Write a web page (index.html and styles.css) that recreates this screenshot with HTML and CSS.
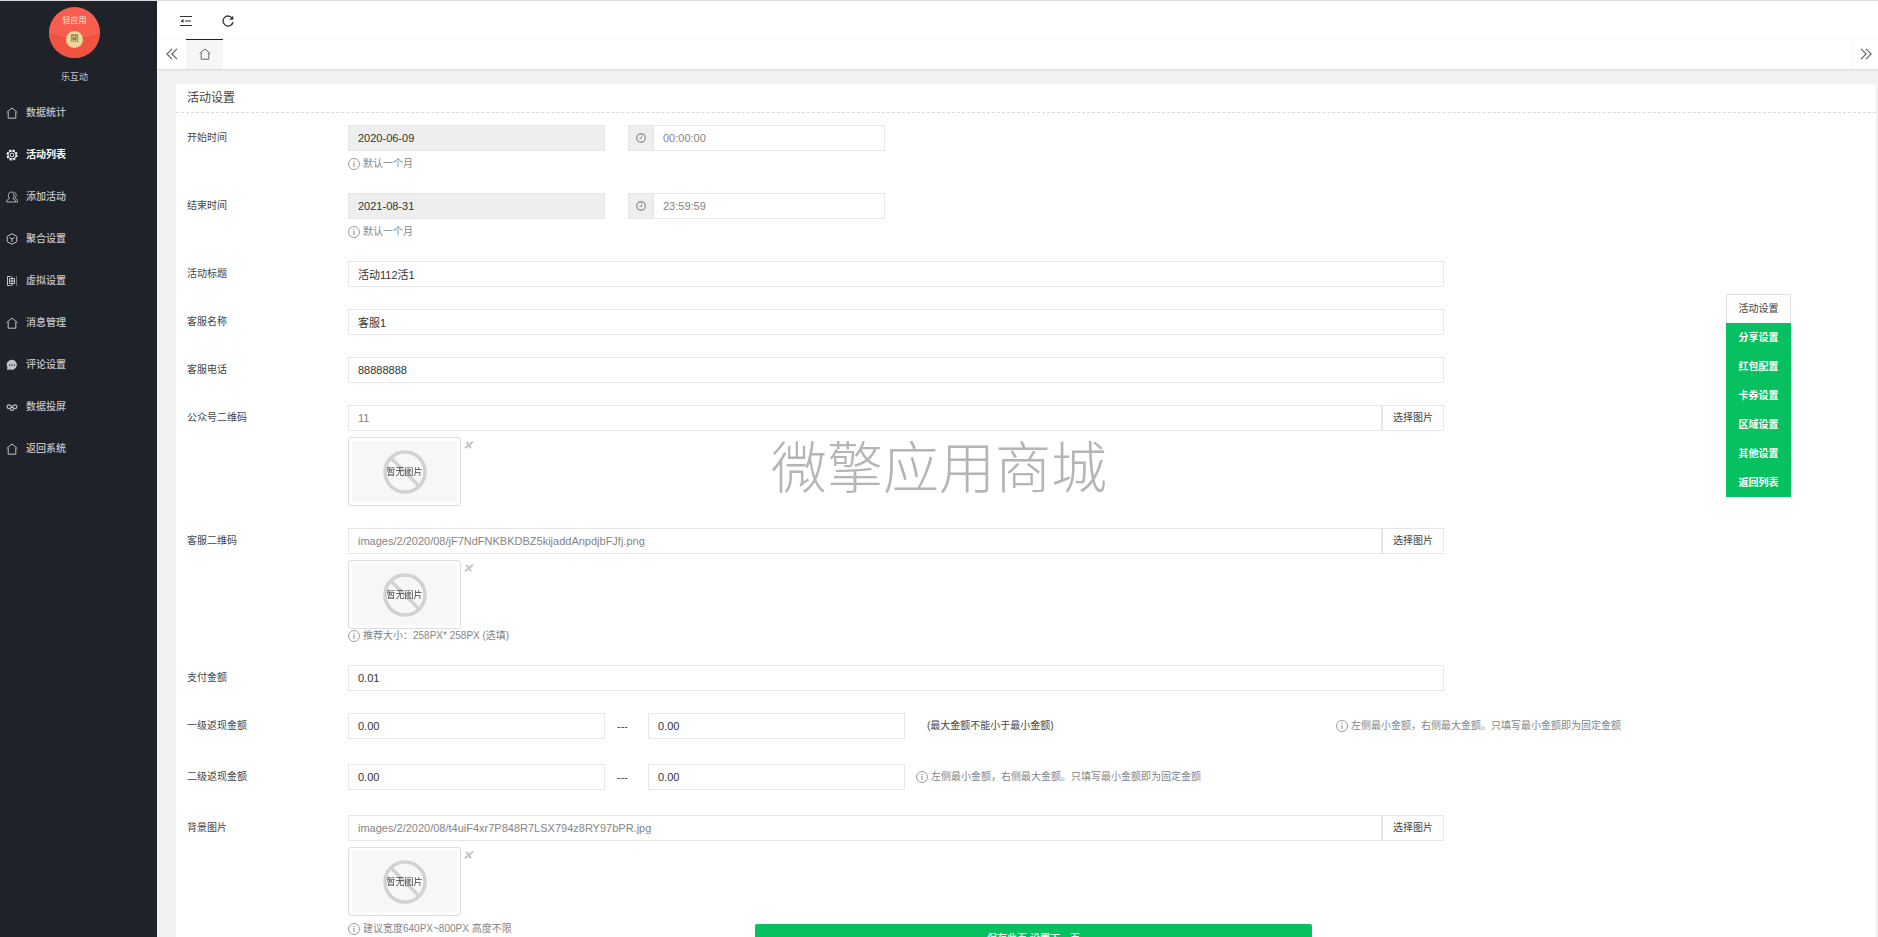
FILE: index.html
```html
<!DOCTYPE html>
<html lang="zh-CN">
<head>
  <meta charset="UTF-8">
  <meta name="viewport" content="width=device-width, initial-scale=1.0">
  <title>活动设置</title>
  <link rel="stylesheet" href="styles.css">
</head>
<body>
  <!-- icons -->
  <svg class="sprite" width="0" height="0" aria-hidden="true">
    <symbol id="i-home" viewBox="0 0 12 12"><path d="M.6 5.6 6 1l5.4 4.6M2.2 4.8v6.4h7.6V4.8" fill="none" stroke="currentColor"/></symbol>
    <symbol id="i-gear" viewBox="0 0 12 12"><circle cx="6" cy="6" r="4.9" fill="none" stroke="currentColor" stroke-width="1.400" stroke-dasharray="2.250 1.600"/><circle cx="6" cy="6" r="4" fill="none" stroke="currentColor" stroke-width=".9"/><circle cx="6" cy="6" r="1.900" fill="none" stroke="currentColor" stroke-width=".9"/></symbol>
    <symbol id="i-user" viewBox="0 0 12 12"><path d="M.6 11c0-2 1.200-2.800 2.900-3.300C1.700 6 2 1 5.200 1s3.500 5 1.700 6.700C8.600 8.200 9.600 9 9.600 11zM7.600 1.200c2.900-.1 3.200 4 1.500 5.900 1.700.5 2.400 1.500 2.400 3.900H9.800" fill="none" stroke="currentColor" stroke-width=".9"/></symbol>
    <symbol id="i-cube" viewBox="0 0 12 12"><path d="M6 .7 10.800 3.300v5.400L6 11.300 1.200 8.700V3.300zM3.500 4.500 6 6l2.500-1.500M6 6v3" fill="none" stroke="currentColor"/></symbol>
    <symbol id="i-board" viewBox="0 0 12 12"><path d="M4.500 1.500h-3v9h3M3.500 3.500h5v5h-5zM6 1.500v9.500M3.500 6h5" fill="none" stroke="currentColor"/><path d="M10.500 1.500v9.500" stroke="currentColor" stroke-dasharray="1 1"/></symbol>
    <symbol id="i-chat" viewBox="0 0 12 12"><path d="M6 .8a5.200 5 0 1 1-2.100 9.700L1 11l.5-2.500A5.100 5 0 0 1 6 .8z" fill="currentColor"/><path d="M3 5.500h1.300v1.200H3zM5.400 5.500h1.200v1.200H5.400zM7.800 5.500h1.200v1.200H7.800z" fill="#20222a"/></symbol>
    <symbol id="i-link" viewBox="0 0 12 12"><path d="M6 6C4.800 4.300 4 3.800 3 3.800a1.900 1.900 0 0 0 0 3.800C4.300 7.600 5 7 6 6s1.900-2.200 3-2.200a1.900 1.900 0 0 1 0 3.800C8 7.600 7 7 6 6zM4 8.500q2 1.500 4 0" fill="none" stroke="currentColor" stroke-width="1.200"/></symbol>
    <symbol id="i-info" viewBox="0 0 12 12"><circle cx="6" cy="6" r="5.500" fill="none" stroke="currentColor" stroke-width=".8"/><path d="M6 5v4M6 3v1" stroke="currentColor"/></symbol>
    <symbol id="i-clock" viewBox="0 0 12 12"><circle cx="6" cy="6" r="4.300" fill="none" stroke="currentColor" stroke-width="1.400"/><path d="M6.500 3.600v2.900H4.400" fill="none" stroke="currentColor"/></symbol>
    <symbol id="i-left" viewBox="0 0 12 12"><path d="M6 .8.900 6 6 11.200M11 .8 5.900 6l5.100 5.200" fill="none" stroke="currentColor" stroke-width="1.200"/></symbol>
    <symbol id="i-right" viewBox="0 0 12 12"><path d="M1 .8 6.100 6 1 11.200M6 .8 11.100 6 6 11.200" fill="none" stroke="currentColor" stroke-width="1.200"/></symbol>
    <symbol id="i-shrink" viewBox="0 0 12 12"><path d="M0 1.500h12M5 6h6M0 10.500h12" stroke="currentColor" stroke-width="1.200"/><path d="M.5 6 3.500 4v4z" fill="currentColor"/></symbol>
    <symbol id="i-refresh" viewBox="0 0 12 12"><path d="M10.300 3.300A5 5 0 1 0 11 7" fill="none" stroke="currentColor" stroke-width="1.300"/><path d="M11.300.7v4.100H7.200z" fill="currentColor"/></symbol>
    <symbol id="i-times" viewBox="0 0 10 8"><path d="M2.500.8 7 7.200M9 .8 1 7.200" stroke="currentColor" stroke-width="2"/></symbol>
    <symbol id="i-ban" viewBox="0 0 44 44"><circle cx="22" cy="22" r="20" fill="none" stroke="currentColor" stroke-width="3.500"/><path d="m8 8 28 28" stroke="currentColor" stroke-width="3.500"/></symbol>
  </svg>

  <div class="layout">
    <aside class="sidebar">
      <div class="brand">
        <div class="logo">
          <svg class="logo-flap" viewBox="0 0 51 51"><path d="M0 27Q25 37 51 27v24H0z" fill="#f0533f"/><path d="M0 27Q25 37 51 27" fill="none" stroke="#d9483a" stroke-width=".8"/></svg>
          <span class="logo-text">轻应用</span>
          <span class="logo-coin">開</span>
        </div>
        <div class="brand-name">乐互动</div>
      </div>
      <nav class="menu">
        <a href="#"><svg><use href="#i-home"/></svg>数据统计</a>
        <a href="#" class="active"><svg><use href="#i-gear"/></svg>活动列表</a>
        <a href="#"><svg><use href="#i-user"/></svg>添加活动</a>
        <a href="#"><svg><use href="#i-cube"/></svg>聚合设置</a>
        <a href="#"><svg><use href="#i-board"/></svg>虚拟设置</a>
        <a href="#"><svg><use href="#i-home"/></svg>消息管理</a>
        <a href="#"><svg><use href="#i-chat"/></svg>评论设置</a>
        <a href="#"><svg><use href="#i-link"/></svg>数据投屏</a>
        <a href="#"><svg><use href="#i-home"/></svg>返回系统</a>
      </nav>
    </aside>

    <div class="main">
      <header class="topbar">
        <button type="button" aria-label="收起菜单"><svg><use href="#i-shrink"/></svg></button>
        <button type="button" aria-label="刷新"><svg><use href="#i-refresh"/></svg></button>
      </header>
      <div class="tabs">
        <button type="button" class="tab-arrow" aria-label="向左"><svg><use href="#i-left"/></svg></button>
        <a href="#" class="tab" aria-label="首页"><svg><use href="#i-home"/></svg></a>
        <button type="button" class="tab-arrow tab-next" aria-label="向右"><svg><use href="#i-right"/></svg></button>
      </div>

      <form class="card">
        <h1 class="card-header">活动设置</h1>
        <div class="card-body">
          <div class="row">
            <label for="startDate">开始时间</label>
            <div class="field">
              <div class="inline">
                <input type="text" id="startDate" class="short" value="2020-06-09" readonly>
                <div class="group short time">
                  <span class="addon"><svg><use href="#i-clock"/></svg></span>
                  <input type="text" class="muted" aria-label="开始时刻" value="00:00:00">
                </div>
              </div>
              <p class="hint spaced"><svg><use href="#i-info"/></svg>默认一个月</p>
            </div>
          </div>
          <div class="row">
            <label for="endDate">结束时间</label>
            <div class="field">
              <div class="inline">
                <input type="text" id="endDate" class="short" value="2021-08-31" readonly>
                <div class="group short time">
                  <span class="addon"><svg><use href="#i-clock"/></svg></span>
                  <input type="text" class="muted" aria-label="结束时刻" value="23:59:59">
                </div>
              </div>
              <p class="hint spaced"><svg><use href="#i-info"/></svg>默认一个月</p>
            </div>
          </div>
          <div class="row">
            <label for="title">活动标题</label>
            <div class="field"><input type="text" id="title" class="long" value="活动112活1"></div>
          </div>
          <div class="row">
            <label for="kfName">客服名称</label>
            <div class="field"><input type="text" id="kfName" class="long" value="客服1"></div>
          </div>
          <div class="row">
            <label for="kfPhone">客服电话</label>
            <div class="field"><input type="text" id="kfPhone" class="long" value="88888888"></div>
          </div>
          <div class="row">
            <label for="mpQr">公众号二维码</label>
            <div class="field">
              <div class="group long">
                <input type="text" id="mpQr" class="muted" value="11">
                <button type="button" class="pick">选择图片</button>
              </div>
              <div class="preview">
                <div class="thumb"><div class="thumb-in"><svg><use href="#i-ban"/></svg><span>暂无图片</span></div></div>
                <button type="button" class="remove" aria-label="删除图片"><svg><use href="#i-times"/></svg></button>
              </div>
            </div>
          </div>
          <div class="row">
            <label for="kfQr">客服二维码</label>
            <div class="field">
              <div class="group long">
                <input type="text" id="kfQr" class="muted" value="images/2/2020/08/jF7NdFNKBKDBZ5kijaddAnpdjbFJfj.png">
                <button type="button" class="pick">选择图片</button>
              </div>
              <div class="preview">
                <div class="thumb"><div class="thumb-in"><svg><use href="#i-ban"/></svg><span>暂无图片</span></div></div>
                <button type="button" class="remove" aria-label="删除图片"><svg><use href="#i-times"/></svg></button>
              </div>
              <p class="hint"><svg><use href="#i-info"/></svg>推荐大小：258PX* 258PX (选填)</p>
            </div>
          </div>
          <div class="row">
            <label for="pay">支付金额</label>
            <div class="field"><input type="text" id="pay" class="long" value="0.01"></div>
          </div>
          <div class="row range">
            <label for="min1">一级返现金额</label>
            <div class="field inline">
              <input type="text" id="min1" class="short" value="0.00">
              <span class="dash">---</span>
              <input type="text" class="short" aria-label="一级最大金额" value="0.00">
              <span class="note">(最大金额不能小于最小金额)</span>
              <p class="hint"><svg><use href="#i-info"/></svg>左侧最小金额，右侧最大金额。只填写最小金额即为固定金额</p>
            </div>
          </div>
          <div class="row range">
            <label for="min2">二级返现金额</label>
            <div class="field inline">
              <input type="text" id="min2" class="short" value="0.00">
              <span class="dash">---</span>
              <input type="text" class="short" aria-label="二级最大金额" value="0.00">
              <p class="hint beside"><svg><use href="#i-info"/></svg>左侧最小金额，右侧最大金额。只填写最小金额即为固定金额</p>
            </div>
          </div>
          <div class="row">
            <label for="bg">背景图片</label>
            <div class="field">
              <div class="group long">
                <input type="text" id="bg" class="muted" value="images/2/2020/08/t4uiF4xr7P848R7LSX794z8RY97bPR.jpg">
                <button type="button" class="pick">选择图片</button>
              </div>
              <div class="preview">
                <div class="thumb"><div class="thumb-in"><svg><use href="#i-ban"/></svg><span>暂无图片</span></div></div>
                <button type="button" class="remove" aria-label="删除图片"><svg><use href="#i-times"/></svg></button>
              </div>
              <p class="hint spaced"><svg><use href="#i-info"/></svg>建议宽度640PX~800PX 高度不限</p>
            </div>
          </div>
        </div>
        <button type="submit" class="save">保存此页 设置下一页</button>
      </form>
    </div>
  </div>

  <nav class="side-nav">
    <a href="#" class="current">活动设置</a>
    <a href="#">分享设置</a>
    <a href="#">红包配置</a>
    <a href="#">卡券设置</a>
    <a href="#">区域设置</a>
    <a href="#">其他设置</a>
    <a href="#">返回列表</a>
  </nav>
  <div class="watermark">微擎应用商城</div>
</body>
</html>
```

FILE: styles.css
```css
* {
  box-sizing: border-box;
}
body {
  margin: 0;
  font-family: "Liberation Sans", "Noto Sans CJK SC", sans-serif;
  font-size: 10px;
  line-height: 14px;
  color: #444;
  background-color: #f1f1f1;
  overflow: hidden;
}
a {
  color: inherit;
  text-decoration: none;
}
button, input {
  font: inherit;
  color: inherit;
}
button {
  padding: 0;
  border: none;
  background: none;
  cursor: pointer;
}
svg {
  display: block;
  flex: none;
  width: 12px;
  height: 12px;
}
.sprite {
  position: absolute;
  width: 0;
  height: 0;
}
.layout {
  display: flex;
  height: 100vh;
  border-top: 1px solid #d9d9de;
}

/* sidebar */
.sidebar {
  flex: none;
  width: 157px;
  background-color: #20222a;
  color: #c2c3c6;
}
.brand {
  display: flex;
  flex-direction: column;
  align-items: center;
  gap: 12px;
  height: 91px;
  padding: 6px 8px 0 0;
  border-bottom: 1px solid #1c1e26;
}
.logo {
  position: relative;
  display: flex;
  flex-direction: column;
  align-items: center;
  gap: 3px;
  width: 51px;
  height: 51px;
  padding-top: 7px;
  border-radius: 50%;
  background-color: #f75e4f;
  overflow: hidden;
}
.logo-flap {
  position: absolute;
  top: 0;
  left: 0;
  width: 51px;
  height: 51px;
}
.logo-text {
  position: relative;
  font-size: 8px;
  color: #ffe4dc;
}
.logo-coin {
  position: relative;
  width: 17px;
  height: 17px;
  border-radius: 50%;
  background-color: #ecd79c;
  color: #6b5a35;
  font-size: 8px;
  line-height: 16px;
  text-align: center;
}
.brand-name {
  font-size: 9px;
}
.menu a {
  display: flex;
  align-items: center;
  gap: 8px;
  height: 42px;
  padding-left: 6px;
  font-weight: 500;
}
.menu a.active {
  color: #fff;
  font-weight: bold;
}

/* top bars */
.main {
  flex: 1;
  min-width: 0;
  overflow: hidden;
}
.topbar {
  display: flex;
  align-items: center;
  gap: 30px;
  height: 37px;
  padding: 0 23px;
  background-color: #fff;
  color: #333;
}
.topbar svg {
  margin-top: 2px;
}
.tabs {
  display: flex;
  height: 31px;
  border-top: 1px solid #f6f6f6;
  background-color: #fff;
  box-shadow: 0 1px 2px rgba(0,0,0,0.1);
  color: #666;
}
.tab-arrow {
  display: flex;
  align-items: center;
  justify-content: center;
  width: 29px;
}
.tab {
  display: flex;
  align-items: center;
  justify-content: center;
  width: 37px;
  padding-bottom: 2px;
  border-top: 1px solid #20222a;
  background-color: #f6f6f6;
}
.tab-next {
  width: 26px;
  margin-left: auto;
  border-left: 1px solid #f6f6f6;
}

/* form card */
.card {
  margin: 15px 2px 0 19px;
  border-radius: 2px;
  background-color: #fff;
}
.card-header {
  margin: 0;
  height: 29px;
  padding-left: 11px;
  border-bottom: 1px dashed #d8d8d8;
  font-size: 12px;
  font-weight: normal;
  line-height: 28px;
}
.card-body {
  padding: 12px 11px;
}
.row {
  display: grid;
  grid-template-columns: 161px minmax(0, 1fr);
  margin-bottom: 22px;
}
.row.range {
  margin-bottom: 25px;
}
.row label {
  line-height: 26px;
}
.inline, .group, .preview {
  display: flex;
}
.inline {
  align-items: center;
}
.field input {
  display: block;
  height: 26px;
  padding: 0 9px 1px;
  border: 1px solid #e6e6e6;
  background-color: #fff;
  color: #333;
  font-size: 11px;
  outline: none;
}
.field input[readonly] {
  background-color: #eee;
}
.field input.muted {
  flex: 1;
  min-width: 0;
  color: #858585;
}
.short {
  width: 257px;
}
.long {
  width: 100%;
  max-width: 1096px;
}
.time {
  margin-left: 23px;
}
.addon {
  display: flex;
  align-items: center;
  justify-content: center;
  width: 25px;
  border: 1px solid #e6e6e6;
  border-right: none;
  background-color: #eee;
  color: #999;
}
.pick {
  width: 62px;
  border: 1px solid #e6e6e6;
}
.hint {
  display: flex;
  align-items: center;
  gap: 3px;
  margin: 0;
  color: #858585;
}
.hint.spaced {
  margin-top: 6px;
}
.hint.beside {
  margin-left: 11px;
}
.dash {
  width: 43px;
  padding-left: 12px;
  font-size: 11px;
}
.note {
  width: 431px;
  padding-left: 22px;
}
.preview {
  gap: 3px;
  align-items: flex-start;
  margin-top: 6px;
}
.thumb {
  width: 113px;
  height: 69px;
  padding: 3px;
  border: 1px solid #ddd;
  border-radius: 3px;
}
.thumb-in {
  display: grid;
  place-items: center;
  height: 100%;
  background-color: #f7f7f7;
}
.thumb-in svg, .thumb-in span {
  grid-area: 1 / 1;
}
.thumb-in svg {
  width: 44px;
  height: 44px;
  color: #d2d2d2;
}
.thumb-in span {
  z-index: 1;
  font-size: 9px;
}
.remove {
  margin-top: 4px;
  color: #c4c4c4;
}
.remove svg {
  width: 10px;
  height: 8px;
}

/* floating parts */
.save {
  position: fixed;
  bottom: -17px;
  left: 755px;
  width: 557px;
  height: 30px;
  border-radius: 2px;
  background-color: #07c160;
  color: #fff;
  font-weight: 500;
}
.side-nav {
  position: fixed;
  top: 294px;
  right: 87px;
  width: 65px;
  background-color: #07c160;
  color: #fff;
  font-weight: bold;
  line-height: 29px;
  text-align: center;
}
.side-nav a {
  display: block;
}
.side-nav .current {
  border: 1px solid #e2e2e2;
  border-bottom: none;
  background-color: #fff;
  color: #444;
  font-weight: normal;
  line-height: 28px;
}
.watermark {
  position: fixed;
  inset: 0;
  display: flex;
  align-items: center;
  justify-content: center;
  color: #b5b5b5;
  font-size: 56px;
  font-weight: 300;
  pointer-events: none;
}
```
